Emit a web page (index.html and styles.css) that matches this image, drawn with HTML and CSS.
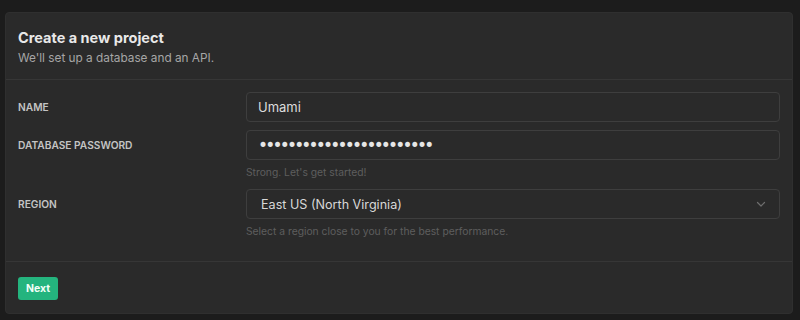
FILE: index.html
```html
<!DOCTYPE html>
<html>
<head>
<meta charset="utf-8">
<link rel="stylesheet" href="styles.css">
</head>
<body>
<div class="card">
  <div class="card-header">
    <h1 class="title">Create a new project</h1>
    <p class="subtitle">We'll set up a database and an API.</p>
  </div>
  <div class="card-body">
    <div class="row">
      <label class="label">NAME</label>
      <div class="field">
        <input class="input" type="text" value="Umami">
      </div>
    </div>
    <div class="row">
      <label class="label">DATABASE PASSWORD</label>
      <div class="field">
        <input class="input password" type="password" value="abcdefghijklmnopqrstuvwx">
        <p class="help">Strong. Let's get started!</p>
      </div>
    </div>
    <div class="row">
      <label class="label">REGION</label>
      <div class="field">
        <div class="select">
          <span class="select-value">East US (North Virginia)</span>
          <svg class="chevron" width="12" height="12" viewBox="0 0 12 12"><path d="M2.5 4.5 L6 8 L9.5 4.5" fill="none" stroke="currentColor" stroke-width="1.2" stroke-linecap="round" stroke-linejoin="round"/></svg>
        </div>
        <p class="help">Select a region close to you for the best performance.</p>
      </div>
    </div>
  </div>
  <div class="card-footer">
    <button class="btn">Next</button>
  </div>
</div>
</body>
</html>
```

FILE: styles.css
```css
* { box-sizing: border-box; }
html, body { height: 100%; }
body {
  margin: 0;
  padding: 12px 7px 6px 5px;
  background: #1c1c1c;
  font-family: Inter, "Noto Sans", sans-serif;
  color: #ddd;
}
.card {
  width: 788px;
  height: 302px;
  background: #2a2a2a;
  border: 1px solid #2f2f2f;
  border-radius: 4px;
  display: flex;
  flex-direction: column;
}
.card-header {
  height: 67px;
  padding: 15px 12px 0;
  border-bottom: 1px solid #363636;
}
.title {
  margin: 0;
  font-size: 14.5px;
  line-height: 20px;
  font-weight: 700;
  color: #e8e8e8;
}
.subtitle {
  margin: 1px 0 0;
  font-size: 11.8px;
  line-height: 18px;
  color: #a6a6a6;
}
.card-body {
  padding: 12px 12px 21px;
  display: flex;
  flex-direction: column;
  gap: 8px;
  border-bottom: 1px solid #363636;
}
.row {
  display: grid;
  grid-template-columns: 228px 534px;
  align-items: start;
}
.label {
  font-size: 10.2px;
  line-height: 30px;
  font-weight: 600;
  color: #c4c4c4;
}
.field { display: flex; flex-direction: column; }
.input, .select {
  width: 534px;
  height: 30px;
  background: #2a2a2a;
  border: 1px solid #3e3e3e;
  border-radius: 4px;
  padding: 0 11px;
  font-family: Inter, "Noto Sans", sans-serif;
  font-size: 13px;
  color: #dcdcdc;
  outline: none;
}
.password {
  font-family: "DejaVu Sans", sans-serif;
  letter-spacing: -2.8px;
  font-size: 17px;
  color: #e6e6e6;
}
.select {
  display: flex;
  align-items: center;
  justify-content: space-between;
  padding: 0 12px 0 14px;
  font-size: 12.6px;
  color: #d8d8d8;
}
.chevron { color: #6e6e6e; }
.help {
  margin: 3px 0 0;
  font-size: 10.3px;
  line-height: 18px;
  color: #5e5e5e;
}
.card-footer {
  padding: 14px 12px 0;
}
.btn {
  height: 23px;
  padding: 0 8px;
  background: #24b47e;
  border: none;
  border-radius: 3px;
  font-family: Inter, "Noto Sans", sans-serif;
  font-size: 10.5px;
  font-weight: 700;
  color: #f2fff8;
}
```
